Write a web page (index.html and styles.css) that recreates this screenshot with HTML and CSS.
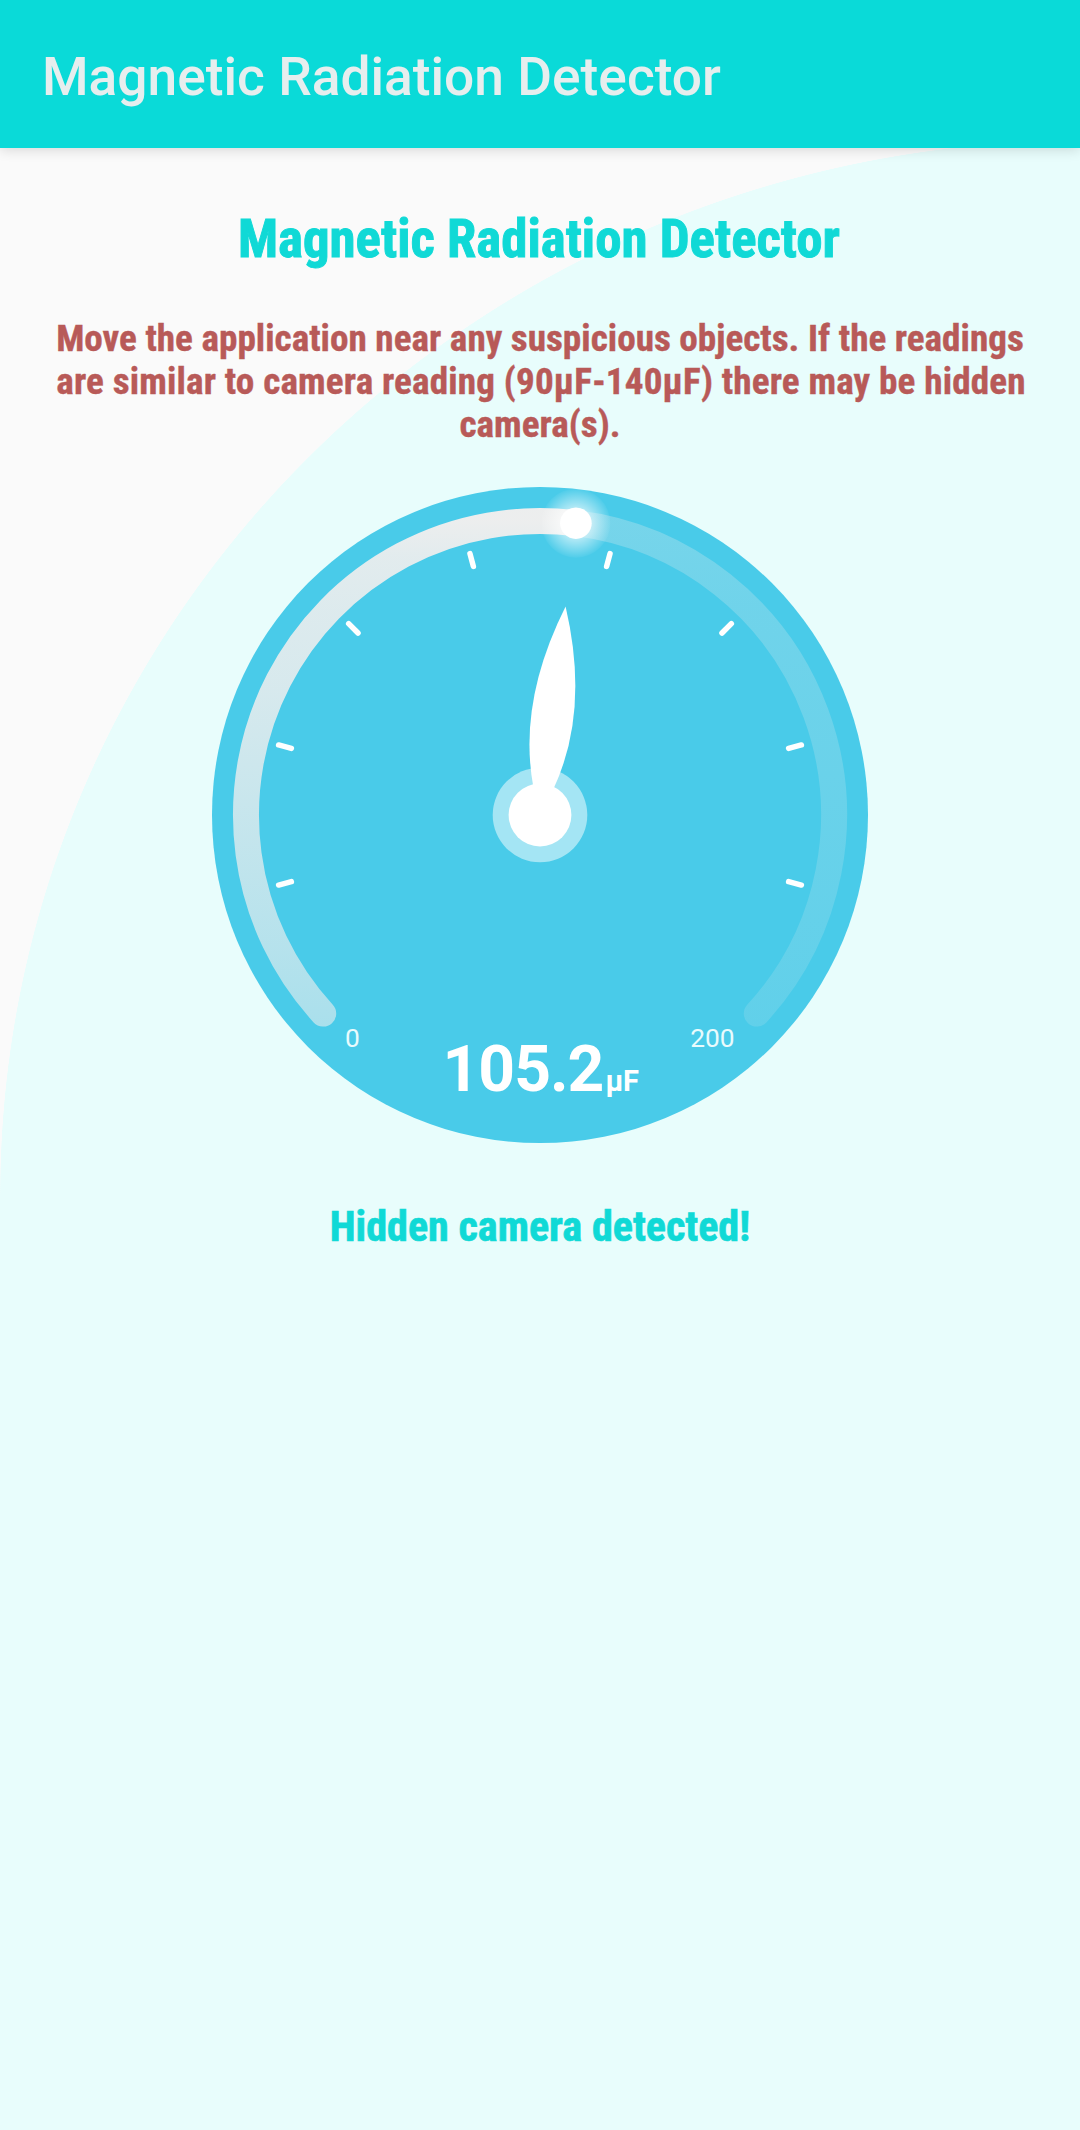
FILE: index.html
```html
<!DOCTYPE html>
<html lang="en">
<head>
<meta charset="utf-8">
<title>Magnetic Radiation Detector</title>
<link rel="stylesheet" href="styles.css">
</head>
<body>
<header class="app-bar"><h1 class="app-title">Magnetic Radiation Detector</h1></header>
<main class="screen">
  <h2 class="heading"><span class="condensed">Magnetic Radiation Detector</span></h2>
  <p class="hint">
    <span class="condensed">Move the application near any suspicious objects. If the readings</span>
    <span class="condensed spaced">are similar to camera reading (90µF-140µF) there may be hidden</span>
    <span class="condensed">camera(s).</span>
  </p>
  <svg class="gauge" viewBox="-328 -328 656 656" width="656" height="656">
    <defs>
      <linearGradient id="filled" gradientUnits="userSpaceOnUse" x1="0" y1="208" x2="0" y2="-294">
        <stop offset="0" stop-color="#eee" stop-opacity=".588"/>
        <stop offset=".146" stop-color="#eee" stop-opacity=".657"/>
        <stop offset=".318" stop-color="#eee" stop-opacity=".725"/>
        <stop offset=".498" stop-color="#eee" stop-opacity=".794"/>
        <stop offset=".671" stop-color="#eee" stop-opacity=".863"/>
        <stop offset=".819" stop-color="#eee" stop-opacity=".897"/>
        <stop offset=".929" stop-color="#eee" stop-opacity=".93"/>
        <stop offset="1" stop-color="#eee" stop-opacity=".99"/>
      </linearGradient>
      <linearGradient id="rest" gradientUnits="userSpaceOnUse" x1="0" y1="-292" x2="0" y2="208">
        <stop offset="0" stop-color="#eee" stop-opacity=".275"/>
        <stop offset=".168" stop-color="#eee" stop-opacity=".236"/>
        <stop offset=".584" stop-color="#eee" stop-opacity=".191"/>
        <stop offset=".832" stop-color="#eee" stop-opacity=".166"/>
        <stop offset="1" stop-color="#eee" stop-opacity=".146"/>
      </linearGradient>
      <radialGradient id="glow">
        <stop offset=".4" stop-color="#fff" stop-opacity=".627"/>
        <stop offset="1" stop-color="#fff" stop-opacity=".04"/>
      </radialGradient>
    </defs>
    <circle class="dial" r="328"/>
    <path class="track" stroke="url(#rest)" d="M35.9-291.8A294 294 0 0 1 216.8 198.6"/>
    <path class="track" stroke="url(#filled)" d="M-216.8 198.6A294 294 0 0 1 35.9-291.8"/>
    <g class="ticks">
      <path transform="rotate(-105)" d="M0-257.4V-270.6"/>
      <path transform="rotate(-75)" d="M0-257.4V-270.6"/>
      <path transform="rotate(-45)" d="M0-257.4V-270.6"/>
      <path transform="rotate(-15)" d="M0-257.4V-270.6"/>
      <path transform="rotate(15)" d="M0-257.4V-270.6"/>
      <path transform="rotate(45)" d="M0-257.4V-270.6"/>
      <path transform="rotate(75)" d="M0-257.4V-270.6"/>
      <path transform="rotate(105)" d="M0-257.4V-270.6"/>
    </g>
    <circle cx="35.9" cy="-291.8" r="34.5" fill="url(#glow)"/>
    <circle class="white" cx="35.9" cy="-291.8" r="15.8"/>
    <circle class="hub-ring" r="47.3"/>
    <path class="white" transform="rotate(7)" d="M0-210Q-36-109-10-27H10Q37-109 0-210Z"/>
    <circle class="white" r="31.4"/>
    <text class="scale" x="-195" y="232">0</text>
    <text class="scale" x="194.500" y="232" text-anchor="end">200</text>
    <text class="value" x="-97.500" y="276">105.2</text>
    <text class="unit" x="65.500" y="276">µF</text>
  </svg>
  <p class="status"><span class="condensed">Hidden camera detected!</span></p>
</main>
</body>
</html>
```
FILE: styles.css
```css
body {
  margin: 0;
  min-height: 2130px;
  display: flex;
  flex-direction: column;
  background: #fafafa;
  font-family: Roboto, "Liberation Sans", sans-serif;
}
.app-bar {
  height: 148px;
  box-sizing: border-box;
  padding: 0 42px;
  display: flex;
  align-items: center;
  background: #0adad8;
  box-shadow: 0 2px 12px rgba(0, 0, 0, .14);
  z-index: 1;
}
.app-title {
  margin: 6px 0 0;
  font-size: 53.3px;
  font-weight: 500;
  line-height: 64px;
  color: #e6eeee;
}
.screen {
  flex: 1;
  display: flex;
  flex-direction: column;
  align-items: center;
  background: radial-gradient(ellipse 1080px 1054px at 1080px 1046.5px, #e8fdfc 99.95%, transparent 100%) 0 0 / 100% 1046px no-repeat,
              linear-gradient(#e8fdfc, #e8fdfc) 0 1046px / 100% 100% no-repeat;
}
.condensed {
  display: block;
  white-space: nowrap;
  font-family: "Roboto Condensed", Roboto, sans-serif;
}
.heading {
  margin: 60px 2px 0 0;
  font-size: 52.9px;
  line-height: 62px;
  color: #10d9d6;
  -webkit-text-stroke: .9px #10d9d6;
}
.hint {
  margin: 47px 0 0;
  font-size: 37.2px;
  font-weight: 700;
  line-height: 43px;
  text-align: center;
  color: #b85a58;
  -webkit-text-stroke: .4px #b85a58;
}
.spaced { letter-spacing: .14px; padding-left: 2px; }
.gauge { margin-top: 41px; }
.dial { fill: #49cbe9; }
.track { fill: none; stroke-width: 26; stroke-linecap: round; }
.ticks { fill: none; stroke: #fff; stroke-width: 5.5; stroke-linecap: round; }
.white { fill: #fff; }
.hub-ring { fill: rgba(255, 255, 255, .5); }
.scale { font-size: 26.3px; fill: #e9fbfd; }
.value { font-size: 64.2px; font-weight: 700; letter-spacing: -1px; fill: #fff; }
.unit { font-size: 29px; font-weight: 700; letter-spacing: -.5px; fill: #fff; }
.status {
  margin: 59px 0 0;
  font-size: 42.1px;
  font-weight: 700;
  line-height: 50px;
  color: #10d9d6;
  -webkit-text-stroke: .7px #10d9d6;
}
```
